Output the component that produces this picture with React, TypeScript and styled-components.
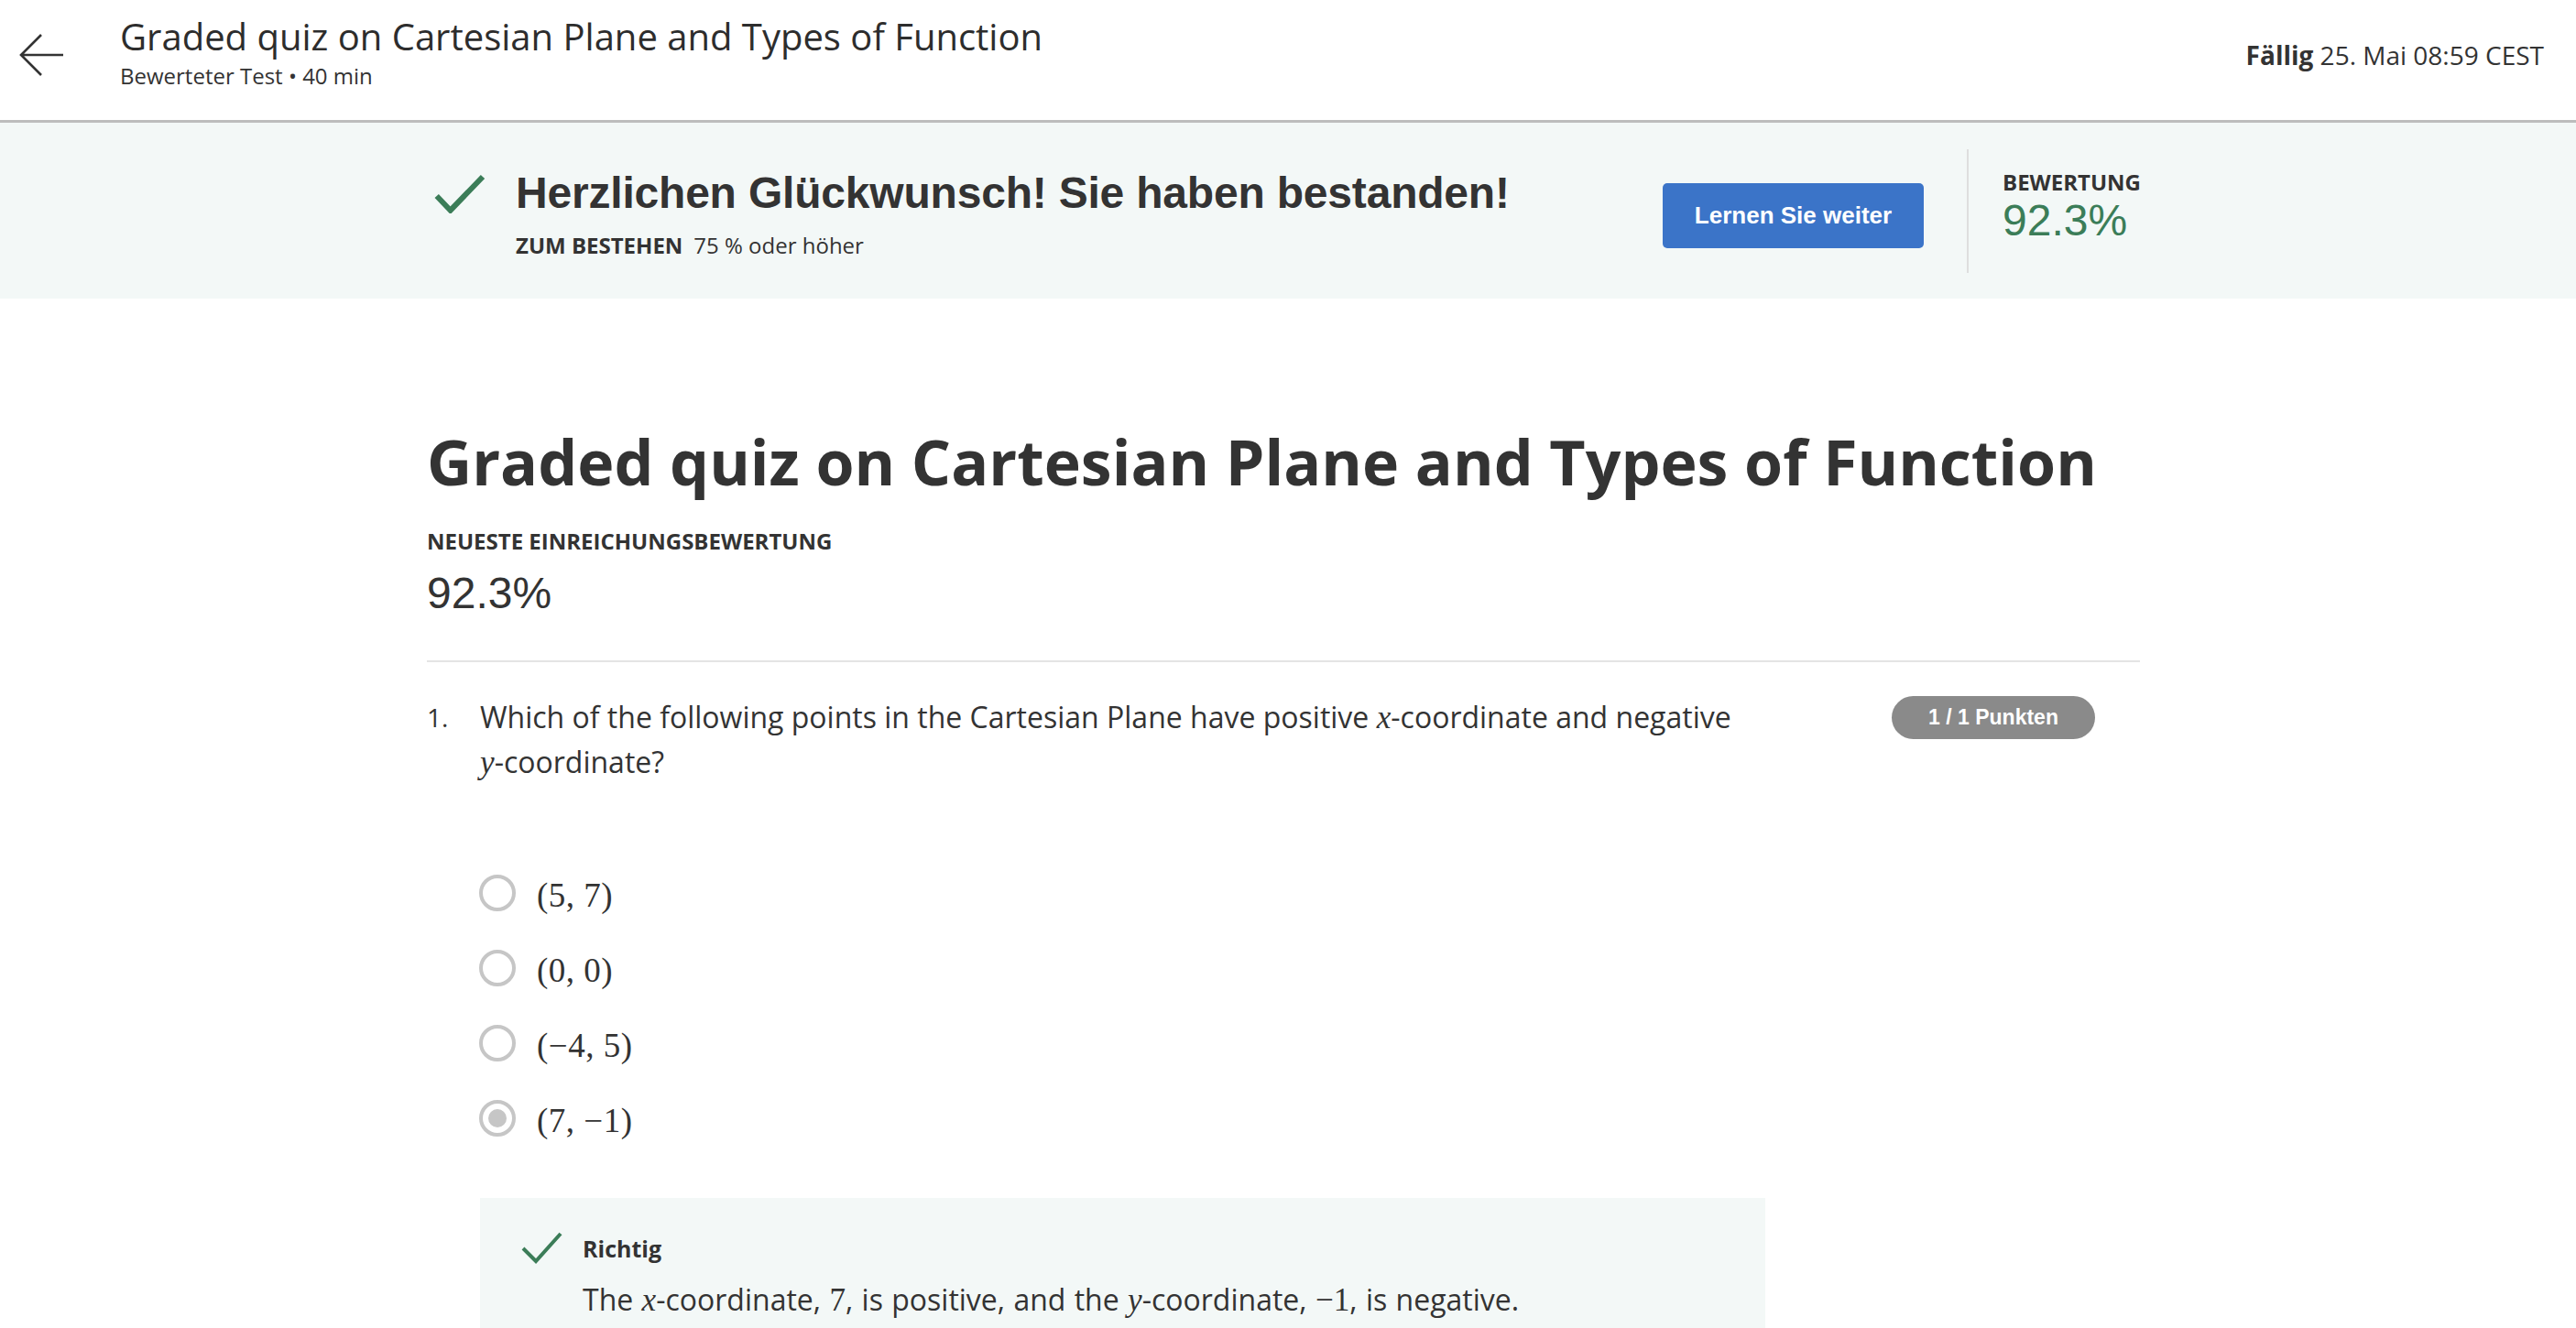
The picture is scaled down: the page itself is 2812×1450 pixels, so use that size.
import React from 'react'
import styled, { createGlobalStyle } from 'styled-components'

const GlobalStyle = createGlobalStyle`
	html, body {
		margin: 0;
		padding: 0;
		background: #ffffff;
	}
	body {
		font-family: 'Open Sans', 'Liberation Sans', sans-serif;
		color: #333333;
	}
	* {
		box-sizing: border-box;
	}
`

const GREEN = '#3b7d58'

const options = [
	{ label: '(5, 7)', selected: false },
	{ label: '(0, 0)', selected: false },
	{ label: '(−4, 5)', selected: false },
	{ label: '(7, −1)', selected: true },
]

const BackArrow = () => (
	<svg width="50" height="50" viewBox="0 0 50 50" fill="none">
		<path
			d="M48 23H2M24 1L2 23L24 45"
			stroke="#333"
			strokeWidth="2.6"
			strokeLinecap="butt"
			strokeLinejoin="miter"
		/>
	</svg>
)

const CheckMark = ({ size }: { size: 'lg' | 'sm' }) =>
	size === 'lg' ? (
		<svg width="56" height="44" viewBox="0 0 56 44" fill="none">
			<polyline points="2.7,25 17.7,40.7 53,4" stroke={GREEN} strokeWidth="6" />
		</svg>
	) : (
		<svg width="45" height="35" viewBox="0 0 45 35" fill="none">
			<polyline points="2,18 16,32 43,2" stroke={GREEN} strokeWidth="4" />
		</svg>
	)

const App = () => {
	return (
		<>
			<GlobalStyle />
			<Header>
				<BackButton>
					<BackArrow />
				</BackButton>
				<TitleBlock>
					<HeaderTitle>Graded quiz on Cartesian Plane and Types of Function</HeaderTitle>
					<HeaderSub>Bewerteter Test • 40 min</HeaderSub>
				</TitleBlock>
				<Due>
					<strong>Fällig</strong> 25. Mai 08:59 CEST
				</Due>
			</Header>

			<Banner>
				<Container>
					<BannerRow>
						<PassBlock>
							<BannerCheck>
								<CheckMark size="lg" />
							</BannerCheck>
							<div>
								<Congrats>Herzlichen Glückwunsch! Sie haben bestanden!</Congrats>
								<PassLine>
									<b>ZUM BESTEHEN</b>75 % oder höher
								</PassLine>
							</div>
						</PassBlock>
						<PrimaryButton>Lernen Sie weiter</PrimaryButton>
						<VDivider />
						<ScoreBlock>
							<SmallCaps>BEWERTUNG</SmallCaps>
							<BannerScore>92.3%</BannerScore>
						</ScoreBlock>
					</BannerRow>
				</Container>
			</Banner>

			<Container>
				<PageTitle>Graded quiz on Cartesian Plane and Types of Function</PageTitle>
				<LatestLabel>NEUESTE EINREICHUNGSBEWERTUNG</LatestLabel>
				<LatestScore>92.3%</LatestScore>
				<Rule />

				<QuestionRow>
					<QNumber>1.</QNumber>
					<QText>
						Which of the following points in the Cartesian Plane have positive <Var>x</Var>-coordinate and
						negative{' '}
						<NoWrap>
							<Var>y</Var>-coordinate?
						</NoWrap>
					</QText>
					<Points>1 / 1 Punkten</Points>
				</QuestionRow>

				<OptionList>
					{options.map((o) => (
						<Option key={o.label}>
							<Radio $selected={o.selected} />
							<MathText>{o.label}</MathText>
						</Option>
					))}
				</OptionList>

				<Feedback>
					<FeedbackHead>
						<CheckMark size="sm" />
						<FeedbackTitle>Richtig</FeedbackTitle>
					</FeedbackHead>
					<FeedbackText>
						The <Var>x</Var>-coordinate, <Num>7</Num>, is positive, and the <Var>y</Var>-coordinate,{' '}
						<Num>−1</Num>, is negative.
					</FeedbackText>
				</Feedback>
			</Container>
		</>
	)
}

const Header = styled.header`
	display: flex;
	align-items: flex-start;
	height: 134px;
	padding: 0 35px 0 21px;
	border-bottom: 3px solid #bdbdbd;
`
const BackButton = styled.div`
	width: 50px;
	height: 50px;
	margin-top: 37px;
	margin-right: 60px;
`
const TitleBlock = styled.div`
	flex: 1;
	padding-top: 16px;
`
const HeaderTitle = styled.h1`
	margin: 0;
	font-size: 40px;
	line-height: 48px;
	font-weight: 400;
	color: #2d2d2d;
`
const HeaderSub = styled.div`
	margin-top: 3px;
	font-size: 24px;
	line-height: 32px;
	color: #333;
`
const Due = styled.div`
	margin-top: 41px;
	font-size: 28px;
	line-height: 38px;
	color: #333;
	strong {
		font-weight: 700;
	}
`

const Banner = styled.section`
	background: #f3f8f7;
	height: 192px;
`
const Container = styled.div`
	width: 1880px;
	margin: 0 auto;
	padding-right: 10px;
`
const BannerRow = styled.div`
	display: flex;
	align-items: center;
	height: 192px;
`
const PassBlock = styled.div`
	flex: 1;
	display: flex;
	align-items: flex-start;
	padding-left: 8px;
	margin-top: 6px;
`
const BannerCheck = styled.div`
	width: 56px;
	height: 44px;
	margin-top: 7px;
	margin-right: 33px;
`
const Congrats = styled.h2`
	margin: 0;
	font-family: 'Liberation Sans', Arial, sans-serif;
	font-weight: 700;
	font-size: 48px;
	line-height: 58px;
	color: #333;
	letter-spacing: -0.2px;
`
const PassLine = styled.div`
	margin-top: 12px;
	font-size: 24px;
	line-height: 32px;
	color: #333;
	b {
		font-weight: 700;
		margin-right: 12px;
	}
`
const PrimaryButton = styled.button`
	width: 285px;
	height: 71px;
	border: none;
	border-radius: 5px;
	background: #3b74c8;
	color: #ffffff;
	font-family: 'Liberation Sans', Arial, sans-serif;
	font-weight: 700;
	font-size: 26px;
	margin-right: 47px;
	margin-top: 10px;
`
const VDivider = styled.div`
	width: 2px;
	height: 135px;
	background: #dedede;
	margin-right: 37px;
`
const ScoreBlock = styled.div`
	width: 150px;
	margin-top: -8px;
`
const SmallCaps = styled.div`
	font-size: 24px;
	line-height: 30px;
	font-weight: 700;
	color: #333;
`
const BannerScore = styled.div`
	font-family: 'Liberation Sans', Arial, sans-serif;
	font-size: 48px;
	line-height: 54px;
	color: ${GREEN};
`

const PageTitle = styled.h1`
	margin: 137px 0 0;
	font-size: 68px;
	line-height: 82px;
	font-weight: 700;
	color: #333;
`
const LatestLabel = styled.div`
	margin-top: 30px;
	font-size: 24px;
	line-height: 32px;
	font-weight: 700;
	color: #333;
`
const LatestScore = styled.div`
	margin-top: 13px;
	font-family: 'Liberation Sans', Arial, sans-serif;
	font-size: 48px;
	line-height: 56px;
	color: #333;
`
const Rule = styled.hr`
	margin: 45px 0 0;
	border: none;
	height: 2px;
	background: #e4e4e4;
`

const QuestionRow = styled.div`
	display: flex;
	align-items: flex-start;
	margin-top: 36px;
	padding-right: 49px;
`
const QNumber = styled.div`
	width: 58px;
	font-size: 28px;
	line-height: 48px;
	color: #333;
`
const QText = styled.div`
	flex: 1;
	font-size: 32px;
	line-height: 48px;
	color: #333;
	padding-right: 80px;
`
const NoWrap = styled.span`
	white-space: nowrap;
`
const Var = styled.span`
	font-family: 'Liberation Serif', 'Times New Roman', serif;
	font-style: italic;
	font-size: 1.1em;
`
const Num = styled.span`
	font-family: 'Liberation Serif', 'Times New Roman', serif;
	font-size: 1.1em;
`
const Points = styled.div`
	width: 222px;
	height: 47px;
	margin-top: 1px;
	border-radius: 24px;
	background: #8a8a8a;
	color: #ffffff;
	font-family: 'Liberation Sans', Arial, sans-serif;
	font-weight: 700;
	font-size: 23px;
	display: flex;
	align-items: center;
	justify-content: center;
`

const OptionList = styled.div`
	display: flex;
	flex-direction: column;
	margin-top: 77px;
	padding-left: 57px;
`
const Option = styled.label`
	display: flex;
	align-items: center;
	height: 82px;
	gap: 23px;
`
const Radio = styled.span<{ $selected: boolean }>`
	width: 40px;
	height: 40px;
	border-radius: 50%;
	border: 4px solid #c6c6c6;
	display: flex;
	align-items: center;
	justify-content: center;
	&::after {
		content: '';
		width: 20px;
		height: 20px;
		border-radius: 50%;
		background: #c6c6c6;
		display: ${(p) => (p.$selected ? 'block' : 'none')};
	}
`
const MathText = styled.span`
	font-family: 'Liberation Serif', 'Times New Roman', serif;
	font-size: 37px;
	color: #333;
	margin-top: 4px;
	letter-spacing: 0.5px;
`

const Feedback = styled.div`
	margin: 46px 0 0 58px;
	width: 1403px;
	background: #f3f8f7;
	padding: 37px 45px 40px;
`
const FeedbackHead = styled.div`
	display: flex;
	align-items: center;
	gap: 22px;
`
const FeedbackTitle = styled.div`
	font-size: 25px;
	line-height: 32px;
	font-weight: 700;
	color: #333;
`
const FeedbackText = styled.div`
	margin-top: 15px;
	padding-left: 67px;
	font-size: 32px;
	line-height: 48px;
	color: #333;
	word-spacing: 1px;
`

export default App
